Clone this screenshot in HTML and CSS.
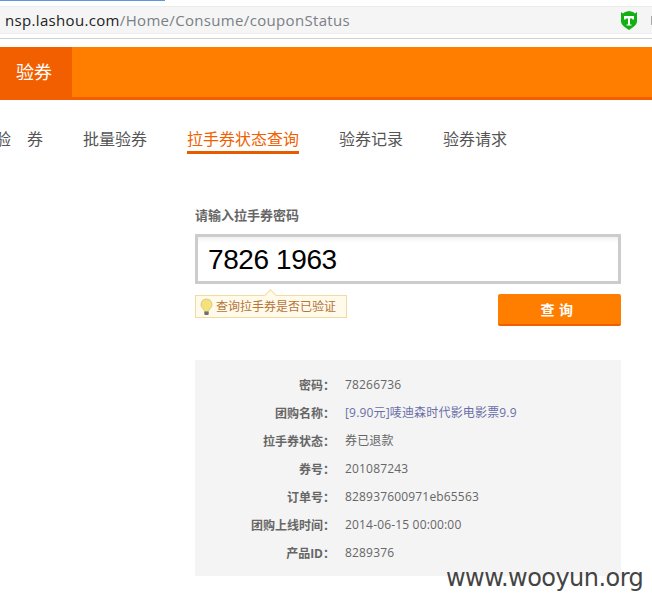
FILE: index.html
```html
<!DOCTYPE html>
<html lang="zh-CN">
<head>
<meta charset="utf-8">
<title>拉手券状态查询</title>
<link rel="stylesheet" href="styles.css">
</head>
<body>
<div class="loadbar"></div>
<div class="addressbar">
  <span class="url"><span class="host">nsp.lashou.com</span>/Home/Consume/couponStatus</span>
  <svg class="shield" width="18" height="19" viewBox="0 0 18 19"><path d="M1 1l2 1.500L5 1l4-1 4 1 2 1.500L17 1v9c0 4-4 6.500-8 9-4-2.500-8-5-8-9z" fill="#12b012"/><path d="M4 5h10v3.500h-1.500L12 7.500h-2v6h1.500v1h-5v-1H8v-6H6l-.5 1H4z" fill="#fff"/></svg>
  <span class="more"></span>
</div>
<div class="browser-line"></div>
<header class="banner"><div class="banner-tab">验券</div></header>
<nav class="tabs">
  <a class="tab tab-first">验　券</a>
  <a class="tab">批量验券</a>
  <a class="tab tab-active">拉手券状态查询</a>
  <a class="tab">验券记录</a>
  <a class="tab">验券请求</a>
</nav>
<main class="panel">
  <h2 class="label">请输入拉手券密码</h2>
  <div class="codebox">7826 1963</div>
  <div class="action-row">
    <div class="hint">
      <svg class="bulb" width="13" height="18" viewBox="0 0 13 18"><path d="M6.500 1a5.500 5.500 0 0 0-3.200 10c.7.6.9 1.400 1 2.500h4.400c.1-1.100.3-1.900 1-2.500a5.500 5.500 0 0 0-3.200-10z" fill="#f6e27a" stroke="#cfc27c" stroke-width=".8"/><rect x="4.300" y="13.500" width="4.400" height="3.500" rx="1" fill="#6f6f6f"/></svg>
      <span>查询拉手券是否已验证</span>
    </div>
    <button class="query">查 询</button>
  </div>
  <dl class="result">
    <div class="row"><dt>密码<span class="colon">：</span></dt><dd>78266736</dd></div>
    <div class="row"><dt>团购名称<span class="colon">：</span></dt><dd class="link">[9.90元]唛迪森时代影电影票9.9</dd></div>
    <div class="row"><dt>拉手券状态<span class="colon">：</span></dt><dd>券已退款</dd></div>
    <div class="row"><dt>券号<span class="colon">：</span></dt><dd>201087243</dd></div>
    <div class="row"><dt>订单号<span class="colon">：</span></dt><dd>828937600971eb65563</dd></div>
    <div class="row"><dt>团购上线时间<span class="colon">：</span></dt><dd>2014-06-15 00:00:00</dd></div>
    <div class="row"><dt>产品ID<span class="colon">：</span></dt><dd>8289376</dd></div>
  </dl>
</main>
<div class="watermark">www.wooyun.org</div>
</body>
</html>
```
FILE: styles.css
```css
* { box-sizing: border-box; }
html, body { margin: 0; padding: 0; }
body {
  width: 652px;
  height: 607px;
  overflow: hidden;
  position: relative;
  background: #fff;
  font-family: "Open Sans", "Noto Sans CJK SC", sans-serif;
  font-size: 12px;
  color: #666;
}
.loadbar { width: 165px; height: 1px; background: #5b96de; }
.addressbar {
  margin-top: 5px;
  height: 28px;
  background: #f5f5f5;
  border-top: 1px solid #ececec;
  border-bottom: 1px solid #ececec;
  display: flex;
  align-items: center;
  padding-left: 5px;
  overflow: hidden;
}
.url { font: 15px/20px "Open Sans", sans-serif; letter-spacing: .33px; color: #7a7f86; flex: 1; }
.host { color: #222; }
.shield { margin-right: 13px; flex: none; }
.more { flex: none; width: 1px; height: 9px; background: #aaa; }
.browser-line { margin-top: 4px; height: 1px; background: #d0d0d0; }
.banner {
  margin-top: 8px;
  height: 53px;
  background: #ff7e00;
  border-bottom: 3px solid #f25f00;
}
.banner-tab {
  width: 72px;
  height: 53px;
  background: #f25f00;
  color: #fff;
  font-size: 18px;
  line-height: 50px;
  padding-left: 16px;
}
.tabs {
  display: flex;
  gap: 40px;
  margin: 27px 0 0 -5px;
  height: 29px;
  font-size: 16px;
  line-height: 24px;
  color: #555;
}
.tab { display: block; height: 27px; white-space: nowrap; }
.tab-active { color: #f25f00; border-bottom: 3px solid #e85c00; }
.panel { width: 426px; margin: 49px 0 0 195px; }
.label { margin: 0; font-size: 13px; line-height: 20px; font-weight: 700; color: #666; }
.codebox {
  margin-top: 9px;
  height: 50px;
  border: 3px solid #ccc;
  box-shadow: inset 0 5px 5px -3px #eee;
  font-family: "Liberation Sans", sans-serif;
  font-size: 28px;
  letter-spacing: -.4px;
  line-height: 45px;
  color: #000;
  padding-left: 10px;
}
.action-row { display: flex; justify-content: space-between; align-items: flex-start; margin-top: 10px; height: 66px; }
.hint {
  position: relative;
  height: 23px;
  width: 152px;
  margin-top: 1px;
  background: #fffaea;
  border: 1px solid #f0dca0;
  color: #b5743c;
  font-size: 12px;
  line-height: 21px;
  padding-left: 4px;
  display: flex;
  align-items: center;
  gap: 3px;
  white-space: nowrap;
}
.hint::before {
  content: "";
  position: absolute;
  left: 70px;
  top: -5px;
  width: 8px;
  height: 8px;
  background: #fffaea;
  border-left: 1px solid #f0dca0;
  border-top: 1px solid #f0dca0;
  transform: rotate(45deg);
}
.bulb { flex: none; }
.query {
  width: 123px;
  height: 32px;
  border: 0;
  border-bottom: 2px solid #f25f00;
  border-radius: 2px;
  background: #ff7e00;
  color: #fff;
  font-family: inherit;
  font-size: 14px;
  font-weight: 700;
  letter-spacing: .5px;
  padding: 0 5px 0 0;
}
.result { margin: 0; height: 216px; background: #f4f4f4; padding: 11px 0; }
.row { display: flex; height: 28px; line-height: 28px; }
dt { width: 140px; text-align: right; font-weight: 700; color: #666; white-space: nowrap; }
.colon { font-family: "Noto Sans CJK TC", sans-serif; }
dd { margin: 0 0 0 10px; color: #666; white-space: nowrap; letter-spacing: .17px; }
.link { color: #6a6fa8; }
.watermark {
  position: absolute;
  left: 446px;
  top: 562px;
  font: 24px/32px "DejaVu Sans", sans-serif;
  color: #444;
  letter-spacing: -.55px;
}
```
